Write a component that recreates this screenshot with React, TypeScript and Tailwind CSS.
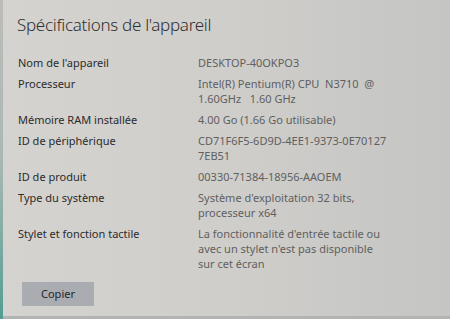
const specs = [
  { label: "Nom de l'appareil", value: ["DESKTOP-40OKPO3"] },
  { label: "Processeur", value: ["Intel(R) Pentium(R) CPU  N3710  @", "1.60GHz   1.60 GHz"] },
  { label: "Mémoire RAM installée", value: ["4.00 Go (1.66 Go utilisable)"] },
  { label: "ID de périphérique", value: ["CD71F6F5-6D9D-4EE1-9373-0E70127", "7EB51"] },
  { label: "ID de produit", value: ["00330-71384-18956-AAOEM"] },
  { label: "Type du système", value: ["Système d'exploitation 32 bits,", "processeur x64"] },
  {
    label: "Stylet et fonction tactile",
    value: ["La fonctionnalité d'entrée tactile ou", "avec un stylet n'est pas disponible", "sur cet écran"],
  },
]

export default function App() {
  return (
    <div className="flex h-[319px] w-[450px] overflow-hidden bg-linear-to-r from-[#d5d3d0] via-[#cfcecb] to-[#c5c5c3] font-['Noto_Sans',sans-serif]">
      <div className="w-[3px] shrink-0 bg-linear-to-b from-[#bdbcba] via-[#a9b8b4] to-[#4f9d92]" />
      <div className="flex flex-1 flex-col border-b-[3px] border-[#b3b3b1]">
        <h1 className="ml-[14px] mt-[13px] text-[17px] font-light leading-[24px] tracking-[-0.3px] text-[#303030]">
          Spécifications de l'appareil
        </h1>
        <div className="mt-[18px] flex flex-col gap-[6px] pl-[15px] text-[11px] leading-[15px]">
          {specs.map((s) => (
            <div key={s.label} className="flex">
              <div className="w-[180px] shrink-0 text-[#2b2b2b]">{s.label}</div>
              <div className="text-[#5f5f5f]">
                {s.value.map((line) => (
                  <div key={line} className="whitespace-pre">
                    {line}
                  </div>
                ))}
              </div>
            </div>
          ))}
        </div>
        <button className="ml-[19px] mt-[11px] h-[24px] w-[72px] bg-[#a9acb1] text-[11px] text-[#262626]">
          Copier
        </button>
      </div>
    </div>
  )
}
